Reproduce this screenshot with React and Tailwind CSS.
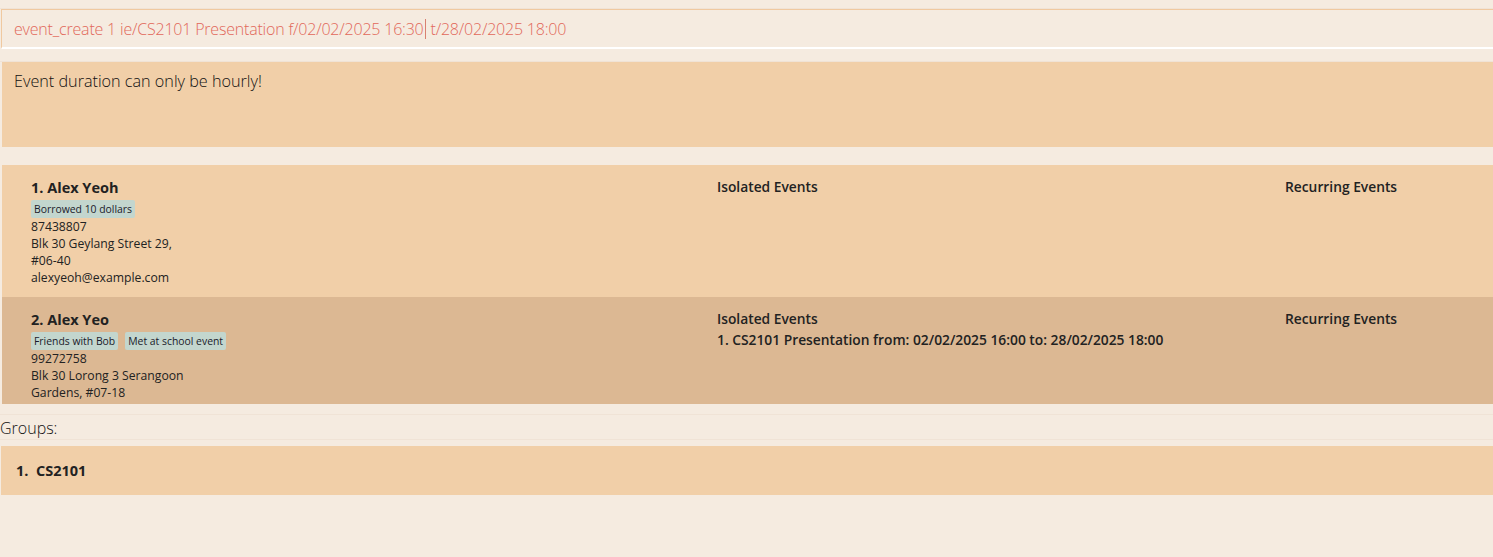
import React from "react";

const persons = [
  {
    id: 1,
    name: "Alex Yeoh",
    tags: ["Borrowed 10 dollars"],
    phone: "87438807",
    address: ["Blk 30 Geylang Street 29,", "#06-40"],
    email: "alexyeoh@example.com",
    isolated: [],
    bg: "bg-[#F1CFA8]",
    h: "h-[132px]",
  },
  {
    id: 2,
    name: "Alex Yeo",
    tags: ["Friends with Bob", "Met at school event"],
    phone: "99272758",
    address: ["Blk 30 Lorong 3 Serangoon", "Gardens, #07-18"],
    email: null,
    isolated: ["CS2101 Presentation from: 02/02/2025 16:00 to: 28/02/2025 18:00"],
    bg: "bg-[#DCB893]",
    h: "h-[107px]",
  },
];

function PersonCard({ p }) {
  return (
    <div className={`flex ml-[2px] overflow-hidden ${p.bg} ${p.h}`}>
      {/* ── Details ── */}
      <div className="w-[715px] shrink-0 pl-[29px] pt-[14px] text-[#222]">
        <p className="text-[14.5px] font-bold leading-[18px]">
          {p.id}. {p.name}
        </p>
        <div className="flex gap-[7px] mt-[3px]">
          {p.tags.map((t) => (
            <span
              key={t}
              className="bg-[#C3D6CE] text-[#1a1a2a] text-[10.4px] leading-[18px] px-[3px] rounded-[2px]"
            >
              {t}
            </span>
          ))}
        </div>
        <div className="text-[12.2px] leading-[17px]">
          <p>{p.phone}</p>
          {p.address.map((a) => (
            <p key={a}>{a}</p>
          ))}
          {p.email && <p>{p.email}</p>}
        </div>
      </div>

      {/* ── Isolated Events ── */}
      <div className="w-[568px] shrink-0 pt-[11px] text-[13.8px] font-semibold leading-[21px] text-[#222]">
        <p>Isolated Events</p>
        {p.isolated.map((e, i) => (
          <p key={e}>
            {i + 1}. {e}
          </p>
        ))}
      </div>

      {/* ── Recurring Events ── */}
      <div className="flex-1 pt-[11px] text-[13.8px] font-semibold leading-[21px] text-[#222]">
        <p>Recurring Events</p>
      </div>
    </div>
  );
}

export default function App() {
  return (
    <div
      className="w-full h-[557px] bg-[#F5EBE0] overflow-hidden"
      style={{ fontFamily: '"Open Sans", "Noto Sans", sans-serif' }}
    >
      <div className="h-[9px] border-b border-[#F0E3D6]" />

      {/* ── Command box ── */}
      <div className="ml-[1px] h-[40px] border-t border-l border-[#F0C9A0] border-b-2 border-b-white flex items-center pl-[12px]">
        <span className="text-[16px] font-light text-[#E2685A] tracking-[-0.2px] whitespace-pre">
          event_create 1 ie/CS2101 Presentation f/02/02/2025 16:30
        </span>
        <span className="w-px h-[20px] bg-[#D98070] mx-[1px]" />
        <span className="text-[16px] font-light text-[#E2685A] tracking-[-0.2px] whitespace-pre">
          {" t/28/02/2025 18:00"}
        </span>
      </div>

      <div className="h-[13px] border-b border-[#F0E3D6]" />

      {/* ── Result box ── */}
      <div className="ml-[2px] h-[85px] bg-[#F1CFA8] pl-[12px] pt-[8px]">
        <p className="text-[16.2px] font-light text-[#111] leading-[22px]">
          Event duration can only be hourly!
        </p>
      </div>

      <div className="h-[18px]" />

      {/* ── Persons ── */}
      {persons.map((p) => (
        <PersonCard key={p.id} p={p} />
      ))}

      {/* ── Groups ── */}
      <div className="h-[11px] border-b border-[#F0E3D6]" />
      <p className="pt-[3px] text-[16px] font-light text-[#111] leading-[21px] border-b border-[#F0E3D6]">
        Groups:
      </p>
      <div className="h-[6px]" />
      <div className="ml-[1px] h-[49px] bg-[#F1CFA8] flex items-center pl-[15px]">
        <p className="text-[14.5px] font-bold text-[#222]">1.&nbsp;&nbsp;CS2101</p>
      </div>
    </div>
  );
}
